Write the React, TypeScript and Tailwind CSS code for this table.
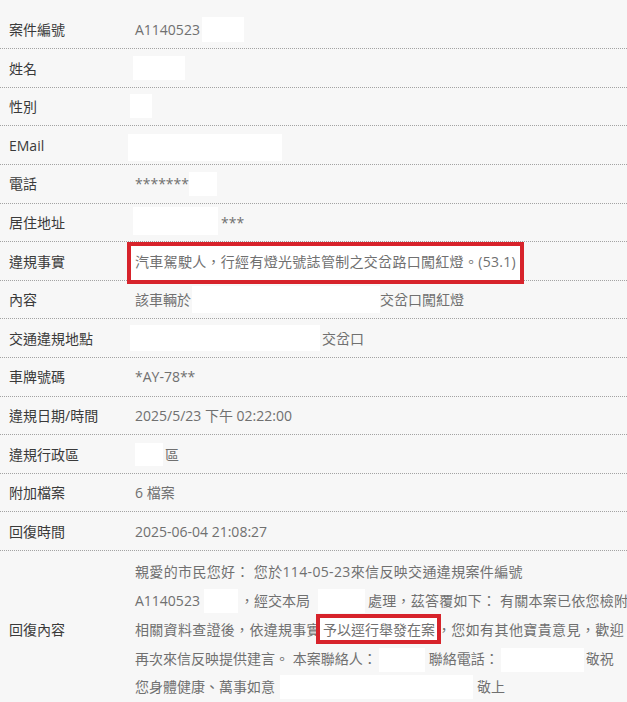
import React from "react";

const Row = ({ label, children }: { label: string; children?: React.ReactNode }) => (
  <div className="grid grid-cols-[135px_1fr] h-[38.6px] border-b border-dotted border-[#a3a3a3] items-center">
    <div className="pl-[9px] text-[#3a3a3a] whitespace-nowrap">{label}</div>
    <div className="flex items-center text-[#707070] whitespace-nowrap">{children}</div>
  </div>
);

export default function App() {
  return (
    <div className="w-[627px] h-[702px] overflow-hidden bg-[#f7f7f7] pt-[10.7px] text-[14px] font-['Open_Sans','Noto_Sans_CJK_TC',sans-serif]">
      <Row label="案件編號">
        <span>A1140523</span>
        <span className="inline-block w-[42px] h-[25px] bg-white ml-[2px]" />
      </Row>
      <Row label="姓名">
        <span className="inline-block w-[52px] h-[24px] bg-white ml-[-2px] mt-[-1px]" />
      </Row>
      <Row label="性別">
        <span className="inline-block w-[22px] h-[24px] bg-white ml-[-5px] mt-[-2px]" />
      </Row>
      <Row label="EMail">
        <span className="inline-block w-[154px] h-[27px] bg-white ml-[-7px] mt-[4px]" />
      </Row>
      <Row label="電話">
        <span>*******</span>
        <span className="inline-block w-[28px] h-[24px] bg-white" />
      </Row>
      <Row label="居住地址">
        <span className="inline-block w-[85px] h-[28px] bg-white ml-[-2px] mt-[-2px]" />
        <span className="ml-[3px]">***</span>
      </Row>
      <Row label="違規事實">
        <span className="relative">
          <span className="absolute left-[-8px] right-[-8px] top-[-9px] bottom-[-12px] border-4 border-[#d7232b] bg-white z-10" />
          <span className="relative z-20 tracking-[0.3px]">汽車駕駛人，行經有燈光號誌管制之交岔路口闖紅燈。(53.1)</span>
        </span>
      </Row>
      <Row label="內容">
        <span>該車輛於</span>
        <span className="inline-block w-[188px] h-[27px] bg-white ml-[1px]" />
        <span>交岔口闖紅燈</span>
      </Row>
      <Row label="交通違規地點">
        <span className="inline-block w-[190px] h-[26px] bg-white ml-[-5px]" />
        <span className="ml-[2px]">交岔口</span>
      </Row>
      <Row label="車牌號碼">
        <span>*AY-78**</span>
      </Row>
      <Row label="違規日期/時間">
        <span>2025/5/23 下午 02:22:00</span>
      </Row>
      <Row label="違規行政區">
        <span className="inline-block w-[28px] h-[23px] bg-white" />
        <span className="ml-[2px]">區</span>
      </Row>
      <Row label="附加檔案">
        <span>6 檔案</span>
      </Row>
      <Row label="回復時間">
        <span>2025-06-04 21:08:27</span>
      </Row>
      <div className="grid grid-cols-[135px_1fr] items-center py-[6.6px]">
        <div className="pl-[9px] text-[#3a3a3a] whitespace-nowrap">回復內容</div>
        <div className="flex flex-col text-[#707070] whitespace-nowrap">
          <div className="flex items-center h-[28.7px] tracking-[0.35px]">親愛的市民您好： 您於114-05-23來信反映交通違規案件編號</div>
          <div className="flex items-center h-[28.7px]">
            <span>A1140523</span>
            <span className="inline-block w-[34px] h-[24px] bg-white ml-[4px]" />
            <span className="ml-[2px]">，經交本局</span>
            <span className="inline-block w-[47px] h-[24px] bg-white ml-[8px]" />
            <span className="ml-[3px] tracking-[0.25px]">處理，茲答覆如下： 有關本案已依您檢附</span>
          </div>
          <div className="flex items-center h-[28.7px]">
            <span className="tracking-[0.3px]">相關資料查證後，依違規事實</span>
            <span className="relative ml-[2px]">
              <span className="absolute left-[-7px] right-[-6px] top-[-5px] bottom-[-4px] border-4 border-[#d7232b] bg-white z-10" />
              <span className="relative z-20">予以逕行舉發在案</span>
            </span>
            <span className="ml-[2px] tracking-[0.4px]">，您如有其他寶貴意見，歡迎</span>
          </div>
          <div className="flex items-center h-[28.7px]">
            <span>再次來信反映提供建言。 本案聯絡人：</span>
            <span className="inline-block w-[46px] h-[24px] bg-white ml-[2px] mt-[4px]" />
            <span className="ml-[4px]">聯絡電話：</span>
            <span className="inline-block w-[83px] h-[24px] bg-white ml-[2px] mt-[4px]" />
            <span className="ml-[2px]">敬祝</span>
          </div>
          <div className="flex items-center h-[28.7px]">
            <span>您身體健康、萬事如意</span>
            <span className="inline-block w-[193px] h-[24px] bg-white ml-[5px]" />
            <span className="ml-[4px]">敬上</span>
          </div>
        </div>
      </div>
    </div>
  );
}
